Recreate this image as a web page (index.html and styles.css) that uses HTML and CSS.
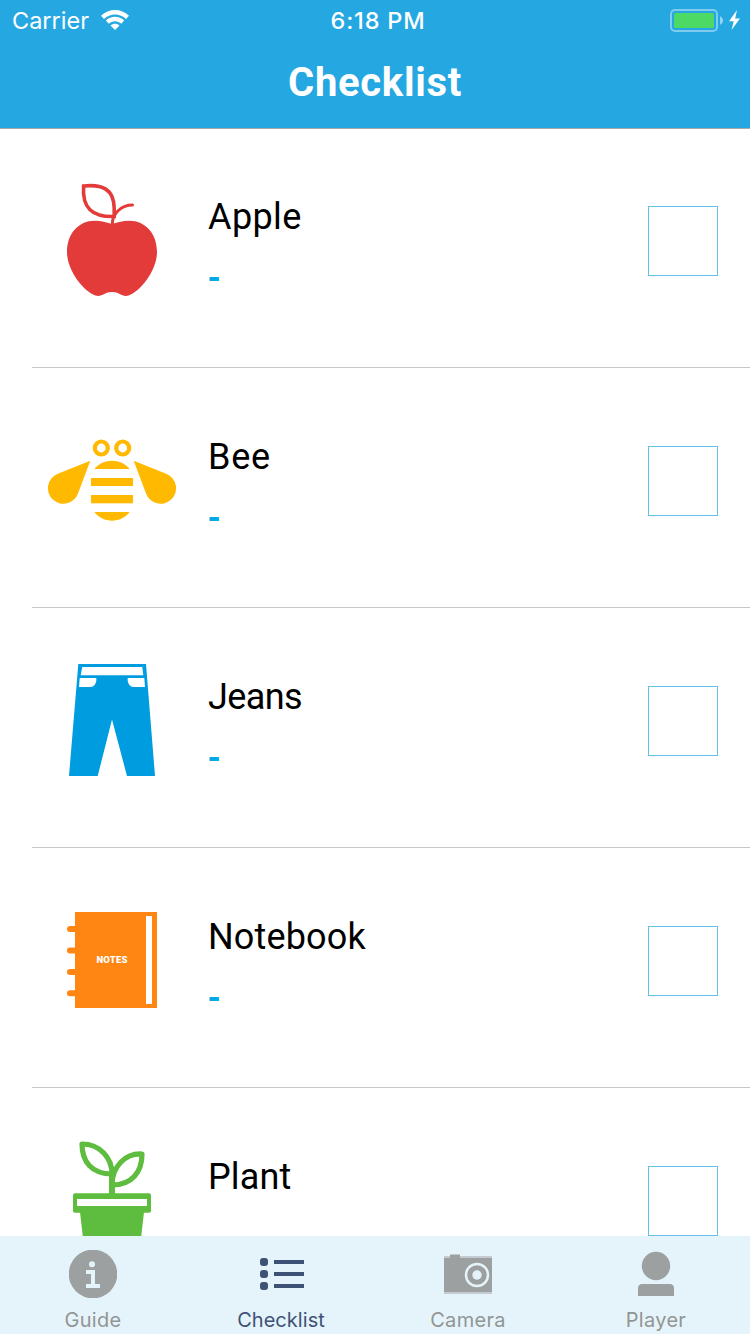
FILE: index.html
```html
<!DOCTYPE html>
<html lang="en">
<head>
<meta charset="utf-8">
<title>Checklist</title>
<link rel="stylesheet" href="styles.css">
</head>
<body>
<div class="screen">
  <header class="header">
    <div class="status">
      <div class="status-left">
        <span class="carrier">Carrier</span>
        <svg class="wifi" width="28" height="20" viewBox="0 0 28 20" fill="#fff">
          <path d="M0 5.8C7.8-1.9 20.2-1.9 28 5.8L25 8.9C19 2.9 9 2.9 3 8.9Z"/>
          <path d="M4.8 10.6C10 5.6 18 5.6 23.2 10.6L20.2 13.7C16.8 10.3 11.2 10.3 7.8 13.7Z"/>
          <path d="M9.5 15.5C12 13.2 16 13.2 18.5 15.5L14 20Z"/>
        </svg>
      </div>
      <span class="clock">6:18 PM</span>
      <div class="status-right">
        <svg class="battery" width="70" height="24" viewBox="0 0 70 24">
          <rect x="1" y="2" width="46" height="21" rx="4" fill="none" stroke="#fff" stroke-opacity=".42" stroke-width="2"/>
          <rect x="4" y="5" width="40" height="15" rx="1.5" fill="#4cd964"/>
          <path d="M50 8.3Q53 9.5 53 12.5T50 16.7Z" fill="#fff" fill-opacity=".5"/>
          <path d="M67 2L59 13.2H63.7L61.5 22L70 10.6H65.2Z" fill="#fff"/>
        </svg>
      </div>
    </div>
    <h1 class="title">Checklist</h1>
  </header>

  <main class="list">
    <section class="row">
      <svg class="picture" viewBox="0 0 128 128">
        <path fill="#e33a3a" d="M64 48C58 46 53 44.7 47 44.7C30 44.7 19 58 19 76C19 94 35 115 47.5 119.5C54 121.5 56 116 64 116C72 116 74 121.5 80.5 119.5C93 115 109 94 109 76C109 58 98 44.7 81 44.7C75 44.7 70 46 64 48Z"/>
        <path fill="none" stroke="#e33a3a" stroke-width="3.6" d="M35.6 10C54 8 66 13 66.2 32V40.5C44 41 34 32 35.6 10Z"/>
        <path fill="none" stroke="#e33a3a" stroke-width="3" stroke-linecap="round" d="M64.3 49C64 37 74 29 84.5 29"/>
      </svg>
      <div class="text"><span class="name apple">Apple</span><span class="note">-</span></div>
      <span class="box"></span>
    </section>
    <section class="row">
      <svg class="picture" viewBox="0 0 128 128" fill="#ffb900">
        <g fill="none" stroke="#ffb900" stroke-width="4.2"><circle cx="53.3" cy="32" r="6.5"/><circle cx="74.7" cy="32" r="6.5"/></g>
        <path d="M46.3 53C55 42 73 42 81.7 53Z"/>
        <rect x="43" y="62" width="42" height="8"/>
        <rect x="43" y="79" width="42" height="8.3"/>
        <path d="M46.3 96H81.7C73 107.5 55 107.5 46.3 96Z"/>
        <path d="M42.3 44.7L9.2 58A15.5 15.5 0 1 0 30 77.5Z"/>
        <path d="M85.7 44.7L118.8 58A15.5 15.5 0 1 1 98 77.5Z"/>
      </svg>
      <div class="text"><span class="name bee">Bee</span><span class="note">-</span></div>
      <span class="box"></span>
    </section>
    <section class="row">
      <svg class="picture" viewBox="0 0 128 128">
        <path fill="#009ce0" d="M30.3 8H98L107 120H79L64 63.5L49.7 120H21Z"/>
        <g fill="#fff">
          <path d="M34.3 11H94.3L95.3 19.3H32.7Z"/>
          <path d="M31.7 22H48.3V25Q47 31 42 31H31Z"/>
          <path d="M96.3 22H79.7V25Q81 31 86 31H97Z"/>
        </g>
      </svg>
      <div class="text"><span class="name jeans">Jeans</span><span class="note">-</span></div>
      <span class="box"></span>
    </section>
    <section class="row">
      <svg class="picture" viewBox="0 0 128 128">
        <path fill="#ff8612" d="M27 16H109V112H27Z"/>
        <g stroke="#ff8612" stroke-width="6" stroke-linecap="round"><path d="M22 33H30M22 54.5H30M22 76H30M22 97.3H30"/></g>
        <rect x="98" y="20" width="6" height="88" fill="#fff"/>
        <text class="notes" x="64" y="66.8" text-anchor="middle" fill="#fff">NOTES</text>
      </svg>
      <div class="text"><span class="name notebook">Notebook</span><span class="note">-</span></div>
      <span class="box"></span>
    </section>
    <section class="row">
      <svg class="picture" viewBox="0 0 128 128">
        <g fill="none" stroke="#5ebd3e" stroke-width="5.2" stroke-linejoin="round">
          <path d="M34 8C52 8 64 22 64 38C44 38 34 26 34 8Z"/>
          <path d="M94 18C78 17 64 30 64 49C84 49 94 36 94 18Z"/>
        </g>
        <path fill="#5ebd3e" d="M61 36H67V58H61ZM32 76H96L91 120H37Z"/>
        <path fill="#5ebd3e" fill-rule="evenodd" d="M27 57.3H101Q103 57.3 103 59.3V74.7Q103 76.7 101 76.7H27Q25 76.7 25 74.7V59.3Q25 57.3 27 57.3ZM29 63V70H99V63Z"/>
      </svg>
      <div class="text"><span class="name plant">Plant</span></div>
      <span class="box"></span>
    </section>
  </main>

  <nav class="tabs">
    <a class="tab">
      <svg width="48" height="48" viewBox="0 0 48 48"><circle cx="24" cy="24" r="24.3" fill="#9da0a0"/><circle cx="23" cy="14.3" r="3" fill="#e5f4fa"/><path fill="#e5f4fa" d="M17 20H26V34H31V38H17V34H22V24H17Z"/></svg>
      <span class="guide">Guide</span>
    </a>
    <a class="tab active">
      <svg width="48" height="48" viewBox="0 0 48 48" fill="#3e5276"><rect x="3" y="8" width="8" height="8" rx="3"/><rect x="3" y="20" width="8" height="8" rx="3"/><rect x="3" y="32" width="8" height="8" rx="3"/><path d="M17 10H47V14H17ZM17 22H47V26H17ZM17 34H47V38H17Z"/></svg>
      <span class="checklist">Checklist</span>
    </a>
    <a class="tab">
      <svg width="48" height="48" viewBox="0 0 48 48"><path fill="#c3cbd0" d="M0 6H48V44H0Z"/><path fill="#9da0a0" d="M0 8H6V4.5H16V8H48V42H0Z"/><circle cx="33" cy="25" r="11" fill="none" stroke="#e5f4fa" stroke-width="2.5"/><circle cx="33" cy="25" r="4.7" fill="#e5f4fa"/></svg>
      <span class="camera">Camera</span>
    </a>
    <a class="tab">
      <svg width="48" height="48" viewBox="0 0 48 48" fill="#9da0a0"><circle cx="24" cy="16" r="14.2"/><path d="M9 34H39Q42 35 42 38V46H6V38Q6 35 9 34Z"/></svg>
      <span class="player">Player</span>
    </a>
  </nav>
</div>
</body>
</html>
```
FILE: styles.css
```css
* { box-sizing: border-box; }
body { margin: 0; background: #fff; font-family: Roboto, sans-serif; }
.screen { width: 750px; height: 1334px; display: flex; flex-direction: column; overflow: hidden; }

.header { height: 129px; flex: none; background: #25a8e2; border-bottom: 1px solid #a5a9ab; color: #fff; }
.status { height: 40px; padding: 0 10px 0 12px; display: grid; grid-template-columns: 1fr auto 1fr; align-items: center; font-family: Inter, sans-serif; font-size: 23.5px; line-height: 40px; }
.status-left { display: flex; align-items: center; gap: 12px; }
.status-right { display: flex; justify-content: flex-end; }
.carrier, .clock { padding-top: 2px; line-height: 38px; }
.clock { font-weight: 500; letter-spacing: 0.8px; padding-left: 4px; }
.title { margin: 19px 0 0; font-size: 40px; line-height: 48px; font-weight: 700; text-align: center; letter-spacing: 0.7px; }

.list { flex: 1; min-height: 0; overflow: hidden; margin-top: -1px; padding-left: 32px; }
.row { height: 240px; display: flex; align-items: flex-start; padding: 48px 32px 0 16px; border-bottom: 1px solid #c8c7cc; }
.picture { width: 128px; height: 128px; flex: none; }
.text { flex: 1; margin-left: 32px; padding-top: 17px; display: flex; flex-direction: column; }
.name { font-size: 36px; line-height: 48px; color: #000; }
.apple { letter-spacing: 0.4px; }
.bee { letter-spacing: 0.8px; }
.jeans { letter-spacing: -0.6px; }
.notebook { letter-spacing: 0.15px; }
.plant { letter-spacing: 0.15px; }
.note { font-size: 32px; line-height: 40px; margin: 17px 0 0 -1px; font-weight: 900; color: #00a8e4; }
.box { width: 70px; height: 70px; margin-top: 30px; border: 1px solid #63c1ea; flex: none; }
.notes { font: 900 9.5px Roboto, sans-serif; letter-spacing: 0.2px; }

.tabs { height: 98px; flex: none; background: #e5f4fa; display: grid; grid-template-columns: 186px 190px 184px 192px; }
.tab { display: flex; flex-direction: column; align-items: center; padding-top: 14px; color: #929595; font: 20px/24px Inter, sans-serif; letter-spacing: 0.3px; }
.tab svg { margin-bottom: 10px; }
.active { color: #3e5276; }
.checklist { letter-spacing: 0.05px; }
```
